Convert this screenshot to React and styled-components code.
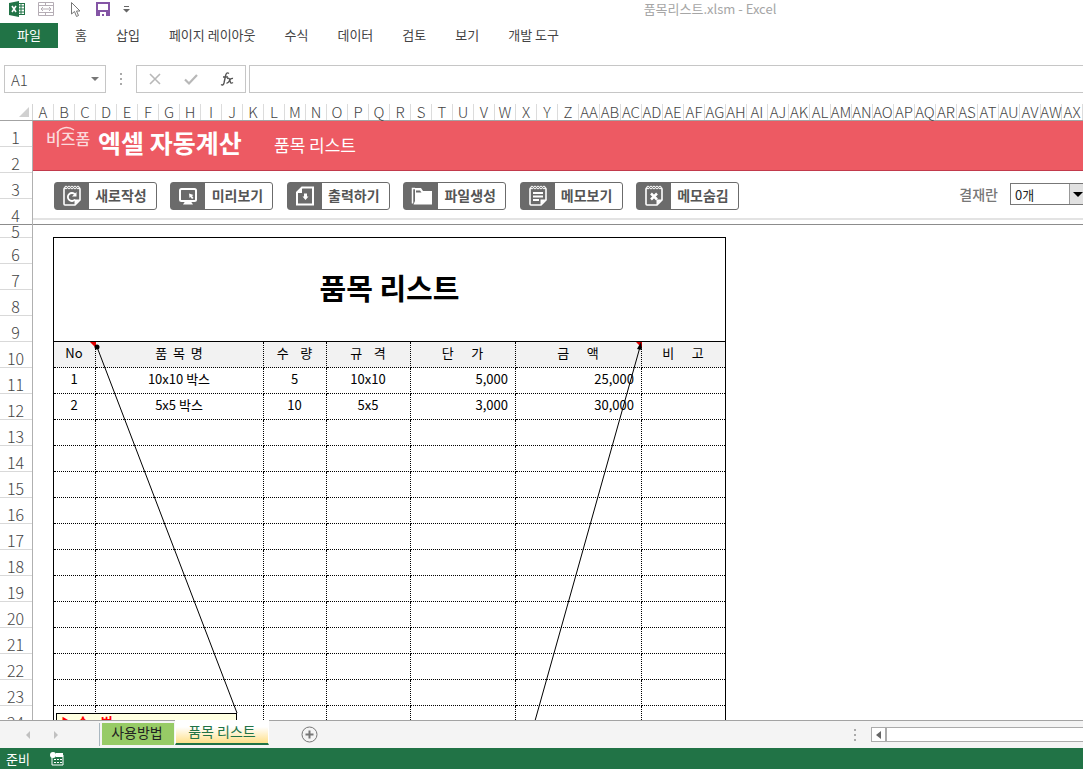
import { useState } from "react";
import styled, { createGlobalStyle } from "styled-components";

const GlobalStyle = createGlobalStyle`
  * {
    box-sizing: border-box;
  }

  body {
    margin: 0;
    background: #fff;
    color: #444;
    font-family: "Noto Sans CJK KR", sans-serif;
    font-size: 13px;
  }

  button, input, select {
    font: inherit;
    color: inherit;
  }
`;

const Window = styled.div`
  display: flex;
  flex-direction: column;
  height: 100vh;
  overflow: hidden;
`;

/* title bar */

const TitleBar = styled.header`
  display: flex;
  align-items: center;
  height: 23px;
  padding-bottom: 5px;
`;

const QuickAccess = styled.div`
  display: flex;
  align-items: center;
  gap: 13px;
  width: 337px;
  padding-left: 9px;
`;

const IconButton = styled.button`
  display: flex;
  padding: 0;
  border: 0;
  background: none;
`;

const FileName = styled.div`
  flex: 1;
  text-align: center;
  color: #a6a6a6;
  line-height: 18px;
`;

/* ribbon */

const Ribbon = styled.nav`
  display: flex;
  align-items: center;
  gap: 29px;
  height: 25px;
  margin-bottom: 17px;
`;

const RibbonTab = styled.button`
  padding: 0 0 2px;
  border: 0;
  background: none;
  line-height: 23px;
  white-space: nowrap;
`;

const FileTab = styled(RibbonTab)`
  width: 58px;
  margin-right: -12px;
  background: #217346;
  color: #fff;
`;

/* formula bar */

const FormulaBar = styled.div`
  display: flex;
  height: 28px;
  margin-bottom: 11px;
  padding-left: 4px;
`;

const NameBox = styled.label`
  display: flex;
  align-items: center;
  width: 102px;
  padding: 0 6px;
  border: 1px solid #c6c6c6;
`;

const NameInput = styled.input`
  flex: 1;
  min-width: 0;
  padding: 0;
  border: 0;
  outline: none;
  font-size: 15px;
  font-weight: 300;
`;

const Triangle = styled.span`
  border: ${(props) => props.$size || 4}px solid transparent;
  border-top-color: ${(props) => props.$color || "#777"};
  border-bottom: 0;
`;

const Dots = styled.div`
  display: flex;
  flex-direction: column;
  align-items: center;
  justify-content: center;
  gap: 3px;
  width: 30px;

  span {
    width: 2px;
    height: 2px;
    background: #aaa;
  }
`;

const FormulaActions = styled.div`
  display: flex;
  align-items: center;
  justify-content: space-between;
  width: 110px;
  padding: 0 11px;
  border: 1px solid #c6c6c6;
`;

const FormulaInput = styled.input`
  flex: 1;
  min-width: 0;
  margin-left: 3px;
  border: 1px solid #c6c6c6;
  border-right: 0;
  outline: none;
`;

/* grid headers */

const ColumnHeaders = styled.div`
  display: flex;
  height: 17px;
  border-bottom: 1px solid #a3a3a3;
`;

const Corner = styled.div`
  display: flex;
  flex: none;
  align-items: flex-end;
  justify-content: flex-end;
  width: 33px;
  padding: 0 3px 3px 0;
  border-right: 1px solid #d4d4d4;
`;

const ColumnHeader = styled.div`
  display: flex;
  flex: none;
  justify-content: center;
  width: 21px;
  border-right: 1px solid #dcdcdc;
  font-size: 15px;
  font-weight: 300;
  line-height: 15px;
`;

const SheetArea = styled.main`
  display: flex;
  flex: 1;
  min-height: 0;
  overflow: hidden;
`;

const RowHeaders = styled.div`
  flex: none;
  width: 33px;
  border-right: 1px solid #b0b0b0;
`;

const RowHeader = styled.div`
  display: flex;
  align-items: flex-end;
  justify-content: center;
  height: ${(props) => (props.$short ? 13 : 26)}px;
  padding-right: 1px;
  border-bottom: 1px solid ${(props) => (props.$frozen ? "#8c8c8c" : "#d9d9d9")};
  font-size: 16px;
  font-weight: 300;
  line-height: ${(props) => (props.$short ? 12 : 18)}px;
`;

const Pane = styled.div`
  flex: 1;
  min-width: 0;
`;

/* frozen top */

const FrozenPane = styled.div`
  height: 104px;
  border-bottom: 1px solid #8c8c8c;
`;

const Banner = styled.div`
  display: flex;
  align-items: center;
  height: 50px;
  padding-left: 13px;
  border-bottom: 1px solid #c23a4c;
  background: #ed5a63;
  color: #fff;
`;

const Brand = styled.div`
  position: relative;
  width: 52px;
  padding-bottom: 16px;
  color: #fbd9db;
  font-size: 16px;
  font-weight: 500;
  line-height: 18px;

  svg {
    position: absolute;
    top: -3px;
    left: 10px;
  }
`;

const BannerTitle = styled.strong`
  width: 176px;
  padding-bottom: 8px;
  font-size: 25px;
  line-height: 30px;
`;

const BannerSub = styled.span`
  padding-bottom: 1px;
  font-size: 17px;
  line-height: 20px;
`;

const Toolbar = styled.div`
  display: flex;
  align-items: center;
  height: 49px;
  padding: 2px 0 0 21px;
  border-bottom: 2px solid #e3e3e3;
`;

const ToolButtons = styled.div`
  display: flex;
  justify-content: space-between;
  width: 685px;
`;

const ToolButton = styled.button`
  display: flex;
  width: 103px;
  height: 28px;
  padding: 0;
  border: 1px solid #6b6b6b;
  border-radius: 3px;
  background: #fff;
  color: #555;
  font-size: 14px;
  font-weight: 700;
  line-height: 25px;

  svg {
    flex: none;
    width: 34px;
    height: 26px;
    background: #6b6b6b;
  }

  span {
    flex: 1;
    padding-right: 3px;
    white-space: nowrap;
  }
`;

const Approval = styled.div`
  display: flex;
  align-items: center;
  gap: 12px;
  margin-left: auto;
  padding-bottom: 3px;

  label {
    color: #777;
    font-size: 14px;
    font-weight: 500;
  }
`;

const SelectBox = styled.div`
  display: flex;
  width: 73px;
  height: 22px;
  border: 1px solid #777;
  border-right: 0;
`;

const Select = styled.select`
  flex: 1;
  min-width: 0;
  padding: 0 4px;
  border: 0;
  outline: none;
  appearance: none;
  background: #fff;
  color: #222;
`;

const SelectArrow = styled.span`
  display: flex;
  align-items: center;
  justify-content: flex-end;
  width: 14px;
  border-left: 1px solid #999;
  background: #e1e1e1;
`;

/* worksheet */

const Worksheet = styled.div`
  position: relative;
  width: 673px;
  margin: 12px 0 0 20px;
  border: 1px solid #000;
  border-bottom: 0;
  color: #000;
`;

const SheetTitle = styled.h1`
  margin: 0;
  height: 104px;
  border-bottom: 1px solid #000;
  font-size: 29px;
  font-weight: 700;
  line-height: 98px;
  text-align: center;
`;

const Table = styled.table`
  width: 100%;
  border-collapse: separate;
  border-spacing: 0;
  table-layout: fixed;

  th, td {
    height: 26px;
    padding: 0 7px 3px 6px;
    border-right: 1px dotted #000;
    border-bottom: 1px dotted #000;
    font-size: 13px;
    font-weight: 400;
    line-height: 18px;
    text-align: center;
    white-space: pre;
  }

  th {
    background: #f2f2f2;
  }

  th:last-child, td:last-child {
    border-right: 0;
  }
`;

const Cell = styled.td`
  && {
    text-align: ${(props) => (props.$right ? "right" : "center")};
  }
`;

const Connectors = styled.svg`
  position: absolute;
  top: 0;
  left: 0;
`;

const Note = styled.div`
  position: absolute;
  top: 475px;
  left: 2px;
  width: 181px;
  height: 60px;
  padding-left: 4px;
  border: 1px solid #000;
  background: #ffffe1;
  color: #f00;
  font-size: 13px;
  font-weight: 700;
  line-height: 16px;
  white-space: pre;
`;

/* bottom bars */

const TabBar = styled.footer`
  display: flex;
  align-items: flex-start;
  height: 28px;
  border-top: 1px solid #a3a3a3;
  background: #f4f4f4;
`;

const TabNav = styled.div`
  display: flex;
  align-items: center;
  justify-content: space-between;
  width: 100px;
  height: 23px;
  margin: 2px 2px 0 0;
  padding: 0 40px 0 25px;
  border-right: 1px solid #a9b7c0;
`;

const SheetTab = styled.button`
  width: 72px;
  height: 22px;
  margin: 2px 1px 0 0;
  padding: 0 2px 4px 0;
  border: 0;
  background: #97cb66;
  color: #222;
  font-size: 14px;
  line-height: 18px;
  white-space: nowrap;
`;

const ActiveTab = styled(SheetTab)`
  width: 94px;
  height: 25px;
  margin: -1px 0 0;
  padding: 0 0 2px;
  border: 1px solid #fff;
  border-top: 0;
  border-bottom: 2px solid #217346;
  background: linear-gradient(#fff 30%, #ffe08a);
  color: #217346;
`;

const AddSheet = styled(IconButton)`
  margin: 5px 0 0 32px;
`;

const ScrollArea = styled.div`
  display: flex;
  width: 243px;
  height: 15px;
  margin: 6px 0 0 auto;
`;

const ScrollBar = styled.div`
  display: flex;
  flex: 1;
  margin-left: 1px;
  border: 1px solid #ababab;
  border-right: 0;
  background: #fff;
`;

const ScrollLeft = styled.button`
  display: flex;
  align-items: center;
  justify-content: center;
  width: 15px;
  padding: 0;
  border: 0;
  border-right: 2px solid #ababab;
  background: #fff;
`;

const StatusBar = styled.div`
  display: flex;
  align-items: center;
  gap: 20px;
  height: 21px;
  padding-left: 6px;
  background: #217346;
  color: #fff;
`;

const ribbonTabs = ["홈", "삽입", "페이지 레이아웃", "수식", "데이터", "검토", "보기", "개발 도구"];

const tools = [
  { label: "새로작성", icon: "new" },
  { label: "미리보기", icon: "preview" },
  { label: "출력하기", icon: "print" },
  { label: "파일생성", icon: "folder" },
  { label: "메모보기", icon: "memo" },
  { label: "메모숨김", icon: "hide" },
];

const widths = [42, 168, 63, 84, 105, 126];
const headings = ["No", "품  목  명", "수    량", "규    격", "단      가", "금      액", "비      고"];

const items = [
  ["1", "10x10 박스", "5", "10x10", "5,000", "25,000", ""],
  ["2", "5x5 박스", "10", "5x5", "3,000", "30,000", ""],
];

// pad with empty rows down to the bottom of the window
const rows = [...items, ...Array.from({ length: 14 }, () => Array(7).fill(""))];

// 0 -> A, 25 -> Z, 26 -> AA
const columnName = (i) =>
  i < 26 ? String.fromCharCode(65 + i) : "A" + String.fromCharCode(65 + i - 26);

const Notepad = ({ children }) => (
  <>
    <path d="M10 5h14q1 0 1 1v11l-5 5H10q-1 0-1-1V6q0-1 1-1z" fill="none" stroke="#fff" strokeWidth="1.600" />
    <path d="M19.500 22v-5.500H25z" fill="#fff" />
    <path d="M10.500 4.500h13" stroke="#6b6b6b" strokeWidth="4" />
    {[11, 14, 17, 20, 23].map((x) => (
      <circle key={x} cx={x} cy="4.500" r="1.300" fill="none" stroke="#fff" />
    ))}
    {children}
  </>
);

const ToolIcon = ({ name }) => (
  <svg viewBox="0 0 34 26" aria-hidden="true">
    {name === "new" && (
      <Notepad>
        <path d="M20 11.500a4 4 0 1 0 0 5" fill="none" stroke="#fff" strokeWidth="1.800" />
        <path d="M21.500 9v4.500H17z" fill="#fff" />
      </Notepad>
    )}
    {name === "preview" && (
      <>
        <rect x="9" y="6" width="16" height="12" rx="1.500" fill="none" stroke="#fff" strokeWidth="2" />
        <path d="M12 21.500h10l-2-3h-6z" fill="#fff" />
        <path d="M18 10.500l4.500 1.500-1.500 1 1.500 2-1.500 1-1.500-2-1 1z" fill="#fff" />
      </>
    )}
    {name === "print" && (
      <>
        <path d="M14 4.500h11v17H9V9.500z" fill="none" stroke="#fff" strokeWidth="2" />
        <path d="M8 10l6-6v6z" fill="#fff" />
        <path d="M16 10.500h3v3h1.500L17.500 17l-3-3.500H16z" fill="#fff" />
      </>
    )}
    {name === "folder" && (
      <>
        <path d="M11 5.500H8.500v15" fill="none" stroke="#fff" strokeWidth="1.500" />
        <path d="M11 5h6l2 3h9v13.500H9.500L11 18z" fill="#fff" />
        <path d="M12 7.500h4l1.500 2H12z" fill="#6b6b6b" />
      </>
    )}
    {name === "memo" && (
      <Notepad>
        <path d="M12 10h10M12 13.500h10M12 17h6" stroke="#fff" strokeWidth="2" />
      </Notepad>
    )}
    {name === "hide" && (
      <Notepad>
        <path d="M14 10.500l6 6M20 10.500l-6 6" stroke="#fff" strokeWidth="2.500" />
      </Notepad>
    )}
  </svg>
);

const ExcelIcon = () => (
  <svg width="16" height="16" viewBox="0 0 16 16">
    <rect x="8.500" y="2.500" width="7" height="11" fill="#fff" stroke="#217346" />
    <path d="M9 5h6M9 8h6M9 11h6M12 3v10" stroke="#217346" />
    <path d="M0 2l10-2v16L0 14z" fill="#217346" />
    <path d="M3 5l4 6M7 5l-4 6" stroke="#fff" strokeWidth="1.600" />
  </svg>
);

const MergeIcon = () => (
  <svg width="16" height="16" viewBox="0 0 16 16" fill="none" stroke="#b5adb5">
    <path d="M.5 1.500h15v13H.5zM.5 4.500h15M.5 11.500h15M7.500 1.500v3M7.500 11.500v3M3 8h10M5 6L3 8l2 2M11 6l2 2-2 2" />
  </svg>
);

const PointerIcon = () => (
  <svg width="16" height="17" viewBox="0 0 16 17" fill="#fff" stroke="#777">
    <path d="M4.500 1.500v11.500l3-2.500 2 5 2-1-2-4.500h3.500z" />
  </svg>
);

const SaveIcon = () => (
  <svg width="14" height="14" viewBox="0 0 14 14">
    <path d="M1 1h12v12H1z" fill="#fff" stroke="#8455a5" strokeWidth="2" />
    <path d="M1 8h12v5H1z" fill="#8455a5" />
    <path d="M4 10h6v4H8v-2H6v2H4z" fill="#fff" />
  </svg>
);

function App() {
  const [cell, setCell] = useState("A1");
  const [formula, setFormula] = useState("");

  return (
    <Window>
      <GlobalStyle />

      <TitleBar>
        <QuickAccess>
          <ExcelIcon />
          <IconButton aria-label="셀 병합"><MergeIcon /></IconButton>
          <IconButton aria-label="개체 선택"><PointerIcon /></IconButton>
          <IconButton aria-label="저장"><SaveIcon /></IconButton>
          <IconButton aria-label="빠른 실행 도구">
            <svg width="7" height="7" viewBox="0 0 7 7" fill="#666">
              <path d="M1 0h5v1H1zM0 3h7L3.500 6.500z" />
            </svg>
          </IconButton>
        </QuickAccess>
        <FileName>품목리스트.xlsm - Excel</FileName>
      </TitleBar>

      <Ribbon>
        <FileTab>파일</FileTab>
        {ribbonTabs.map((tab) => (
          <RibbonTab key={tab}>{tab}</RibbonTab>
        ))}
      </Ribbon>

      <FormulaBar>
        <NameBox>
          <NameInput aria-label="이름 상자" value={cell} onChange={(e) => setCell(e.target.value)} />
          <Triangle />
        </NameBox>
        <Dots><span /><span /><span /></Dots>
        <FormulaActions>
          <IconButton aria-label="취소">
            <svg width="14" height="14" viewBox="0 0 14 14" stroke="#b8b8b8" strokeWidth="1.600">
              <path d="M2 2l10 10M12 2L2 12" />
            </svg>
          </IconButton>
          <IconButton aria-label="입력">
            <svg width="14" height="14" viewBox="0 0 14 14" fill="none" stroke="#b8b8b8" strokeWidth="2.200">
              <path d="M1 7.500l4 4L13 3" />
            </svg>
          </IconButton>
          <IconButton aria-label="함수 삽입">
            <svg width="14" height="16" viewBox="0 0 14 16" fill="none" stroke="#555" strokeWidth="1.400">
              <path d="M9 2.500c-2-1.500-3 0-3.500 2.500L4 12c-.5 2-1.500 2.500-3 1.500M3 6h5" />
              <path d="M7 7.500c2-1 2.500 0 3 2.500s1.500 2.500 3 1.500M13 7.500c-2-.5-3 1-3.500 2S8 12.500 6.500 12" />
            </svg>
          </IconButton>
        </FormulaActions>
        <FormulaInput aria-label="수식 입력줄" value={formula} onChange={(e) => setFormula(e.target.value)} />
      </FormulaBar>

      <ColumnHeaders>
        <Corner>
          <svg width="10" height="10" viewBox="0 0 10 10"><path d="M10 0v10H0z" fill="#d0d0d0" /></svg>
        </Corner>
        {Array.from({ length: 50 }, (_, i) => (
          <ColumnHeader key={i}>{columnName(i)}</ColumnHeader>
        ))}
      </ColumnHeaders>

      <SheetArea>
        <RowHeaders>
          {Array.from({ length: 24 }, (_, i) => (
            <RowHeader key={i} $short={i === 4} $frozen={i === 3}>{i + 1}</RowHeader>
          ))}
        </RowHeaders>

        <Pane>
          <FrozenPane>
            <Banner>
              <Brand>
                비즈폼
                <svg width="20" height="8" viewBox="0 0 20 8" fill="none" stroke="#fbd9db" strokeWidth="1.500">
                  <path d="M1 7C5 1 12 0 18 4" />
                </svg>
              </Brand>
              <BannerTitle>엑셀 자동계산</BannerTitle>
              <BannerSub>품목 리스트</BannerSub>
            </Banner>
            <Toolbar>
              <ToolButtons>
                {tools.map((tool) => (
                  <ToolButton key={tool.label}>
                    <ToolIcon name={tool.icon} />
                    <span>{tool.label}</span>
                  </ToolButton>
                ))}
              </ToolButtons>
              <Approval>
                <label htmlFor="approval">결재란</label>
                <SelectBox>
                  <Select id="approval" defaultValue="0">
                    <option value="0">0개</option>
                    <option value="1">1개</option>
                    <option value="2">2개</option>
                  </Select>
                  <SelectArrow><Triangle $size={5} $color="#000" /></SelectArrow>
                </SelectBox>
              </Approval>
            </Toolbar>
          </FrozenPane>

          <Worksheet>
            <SheetTitle>품목 리스트</SheetTitle>
            <Table>
              <colgroup>
                {widths.map((w, i) => <col key={i} width={w} />)}
                <col />
              </colgroup>
              <thead>
                <tr>
                  {headings.map((h) => <th key={h} scope="col">{h}</th>)}
                </tr>
              </thead>
              <tbody>
                {rows.map((row, i) => (
                  <tr key={i}>
                    {row.map((value, j) => (
                      <Cell key={j} $right={j === 4 || j === 5}>{value}</Cell>
                    ))}
                  </tr>
                ))}
              </tbody>
            </Table>
            <Note>▶ 수    법</Note>
            <Connectors width="671" height="490" viewBox="0 0 671 490">
              <path d="M36 104h6v6zM582 104h6v6z" fill="#e00000" />
              <path d="M43 109L183 475M586 109L479 490" stroke="#000" strokeWidth="1" />
              <circle cx="43" cy="109" r="2.500" />
              <path d="M587 104l1 8-5-1z" />
            </Connectors>
          </Worksheet>
        </Pane>
      </SheetArea>

      <TabBar>
        <TabNav>
          <svg width="5" height="8" viewBox="0 0 5 8" fill="#c0c0c0"><path d="M5 0v8L1 4z" /></svg>
          <svg width="5" height="8" viewBox="0 0 5 8" fill="#c0c0c0"><path d="M0 0v8l4-4z" /></svg>
        </TabNav>
        <SheetTab>사용방법</SheetTab>
        <ActiveTab>품목 리스트</ActiveTab>
        <AddSheet aria-label="새 시트">
          <svg width="17" height="17" viewBox="0 0 17 17" fill="none" stroke="#777">
            <circle cx="8.500" cy="8.500" r="7.500" />
            <path d="M8.500 4.500v8M4.500 8.500h8" strokeWidth="2" />
          </svg>
        </AddSheet>
        <ScrollArea>
          <Dots><span /><span /><span /></Dots>
          <ScrollBar>
            <ScrollLeft aria-label="왼쪽으로 스크롤">
              <svg width="5" height="8" viewBox="0 0 5 8" fill="#666"><path d="M5 0v8L0 4z" /></svg>
            </ScrollLeft>
          </ScrollBar>
        </ScrollArea>
      </TabBar>

      <StatusBar>
        준비
        <svg width="14" height="14" viewBox="0 0 14 14">
          <path d="M2 3h11v10H2z" fill="#217346" stroke="#fff" />
          <path d="M6 1h7v4H6zM4 7h2v1H4zM7 7h2v1H7zM10 7h2v1h-2zM4 10h2v1H4zM7 10h2v1H7zM10 10h2v1h-2z" fill="#fff" />
          <circle cx="3" cy="3" r="3" fill="#fff" />
        </svg>
      </StatusBar>
    </Window>
  );
}

export default App;
